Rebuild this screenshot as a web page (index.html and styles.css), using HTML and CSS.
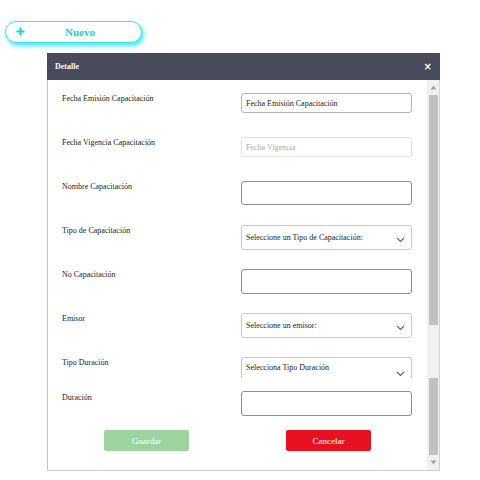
FILE: index.html
```html
<!DOCTYPE html>
<html lang="es">
<head>
<meta charset="utf-8">
<title>Detalle</title>
<link rel="stylesheet" href="styles.css">
</head>
<body>
<div class="page">
  <button class="btn-new" type="button"><svg class="plus" width="9" height="9" viewBox="0 0 9 9"><path d="M4.5 0.5V8.5M0.5 4.5H8.5" stroke="#14cfe8" stroke-width="2"/></svg><span class="btn-new-label">Nuevo</span></button>
  <div class="modal">
    <div class="modal-header"><span class="modal-title">Detalle</span><span class="modal-close">×</span></div>
    <div class="modal-body">
      <div class="content">
        <div class="row"><div class="lbl">Fecha Emisión Capacitación</div><div class="field f-short">Fecha Emisión Capacitación</div></div>
        <div class="row"><div class="lbl">Fecha Vigencia Capacitación</div><div class="field f-short f-disabled">Fecha Vigencia</div></div>
        <div class="row"><div class="lbl">Nombre Capacitación</div><div class="field f-tall f-dark"></div></div>
        <div class="row"><div class="lbl">Tipo de Capacitación</div><div class="field f-select">Seleccione un Tipo de Capacitación:<svg class="chev" width="9" height="6" viewBox="0 0 9 6"><polyline points="1,1 4.5,4.5 8,1" fill="none" stroke="#666" stroke-width="1.2"/></svg></div></div>
        <div class="row"><div class="lbl">No Capacitación</div><div class="field f-select f-dark"></div></div>
        <div class="row"><div class="lbl">Emisor</div><div class="field f-select">Seleccione un emisor:<svg class="chev" width="9" height="6" viewBox="0 0 9 6"><polyline points="1,1 4.5,4.5 8,1" fill="none" stroke="#666" stroke-width="1.2"/></svg></div></div>
        <div class="row row-cut"><div class="lbl">Tipo Duración</div><div class="field f-select f-cut">Selecciona Tipo Duración<svg class="chev chev-low" width="9" height="6" viewBox="0 0 9 6"><polyline points="1,1 4.5,4.5 8,1" fill="none" stroke="#666" stroke-width="1.2"/></svg></div></div>
        <div class="row row-last"><div class="lbl lbl-last">Duración</div><div class="field f-select f-dark"></div></div>
        <div class="actions">
          <button class="btn btn-save" type="button">Guardar</button>
          <button class="btn btn-cancel" type="button">Cancelar</button>
        </div>
      </div>
      <div class="scrollbar">
        <div class="sb-arrow"><svg width="7" height="5" viewBox="0 0 7 5"><polygon points="3.5,0.5 6.5,4.5 0.5,4.5" fill="#a3a3a3"/></svg></div>
        <div class="sb-thumb sb-thumb-a"></div>
        <div class="sb-gap"></div>
        <div class="sb-thumb sb-thumb-b"></div>
        <div class="sb-arrow"><svg width="7" height="5" viewBox="0 0 7 5"><polygon points="0.5,0.5 6.5,0.5 3.5,4.5" fill="#a3a3a3"/></svg></div>
      </div>
    </div>
  </div>
</div>
</body>
</html>
```
FILE: styles.css
```css
* { box-sizing: border-box; }
html, body { margin: 0; padding: 0; background: #fff; }
body { font-family: "Liberation Serif", "Times New Roman", serif; color: #222; }

.page {
  padding: 21px 0 0 5px;
  display: flex;
  flex-direction: column;
  align-items: flex-start;
}

.btn-new {
  width: 137px;
  height: 22px;
  border: 1px solid #33e6f7;
  border-radius: 11px;
  background: #fff;
  box-shadow: 2px 3px 4px rgba(0, 220, 245, 0.7);
  display: flex;
  align-items: center;
  padding: 0 0 0 10px;
  font-family: "Liberation Serif", serif;
  color: #14cfe8;
  cursor: pointer;
}
.plus { margin-top: -2px; flex: none; }
.btn-new-label { flex: 1; text-align: center; font-weight: bold; font-size: 11px; padding-right: 6px; }

.modal {
  margin: 10px 0 0 42px;
  width: 393px;
}
.modal-header {
  height: 27px;
  background: #474b5b;
  color: #fff;
  display: flex;
  align-items: center;
  justify-content: space-between;
  padding: 0 8px 0 8px;
}
.modal-title { font-weight: bold; font-size: 8px; }
.modal-close { font-family: "DejaVu Sans", sans-serif; font-weight: bold; font-size: 10px; }

.modal-body {
  height: 391px;
  display: flex;
  border-left: 1px solid #c4c4c4;
  border-right: 1px solid #d4d4d4;
  border-bottom: 1px solid #cfcfcf;
}
.content {
  flex: 1;
  padding: 13px 15px 0 14px;
}
.row {
  height: 44px;
  display: flex;
  align-items: flex-start;
}
.row-cut { height: 34px; }
.row-last { height: 39px; }
.lbl {
  width: 179px;
  font-size: 8px;
  line-height: 10px;
  padding-top: 1px;
  color: #222;
}
.lbl-last { padding-top: 2px; }
.field {
  width: 171px;
  height: 25px;
  border: 1px solid #c9c9c9;
  border-radius: 3px;
  font-size: 8px;
  color: #222;
  display: flex;
  align-items: center;
  padding: 0 4px;
  position: relative;
}
.f-short { height: 20px; border-color: #b4b4b4; }
.f-disabled { border-color: #e2e2e2; color: #aaa; }
.f-tall { height: 24px; }
.f-dark { border-color: #8e8e8e; }
.f-select { height: 25px; }
.f-cut { height: 21px; border-bottom: none; border-radius: 3px 3px 0 0; align-items: flex-start; padding-top: 5px; }
.chev { position: absolute; right: 6px; top: 11px; }
.chev-low { top: 13px; }

.actions {
  display: flex;
  padding-left: 42px;
  gap: 97px;
}
.btn {
  width: 85px;
  height: 21px;
  border: none;
  border-radius: 2px;
  color: #fff;
  font-family: "Liberation Serif", serif;
  font-size: 9px;
}
.btn-save { background: #9bd49c; }
.btn-cancel { background: #e81123; }

.scrollbar {
  width: 12px;
  background: #f1f1f1;
  display: flex;
  flex-direction: column;
  align-items: center;
}
.sb-arrow {
  height: 15px;
  width: 100%;
  display: flex;
  align-items: center;
  justify-content: center;
}
.sb-thumb { width: 9px; background: #c1c1c1; }
.sb-thumb-a { height: 230px; }
.sb-gap { height: 53px; }
.sb-thumb-b { height: 77px; }
```
